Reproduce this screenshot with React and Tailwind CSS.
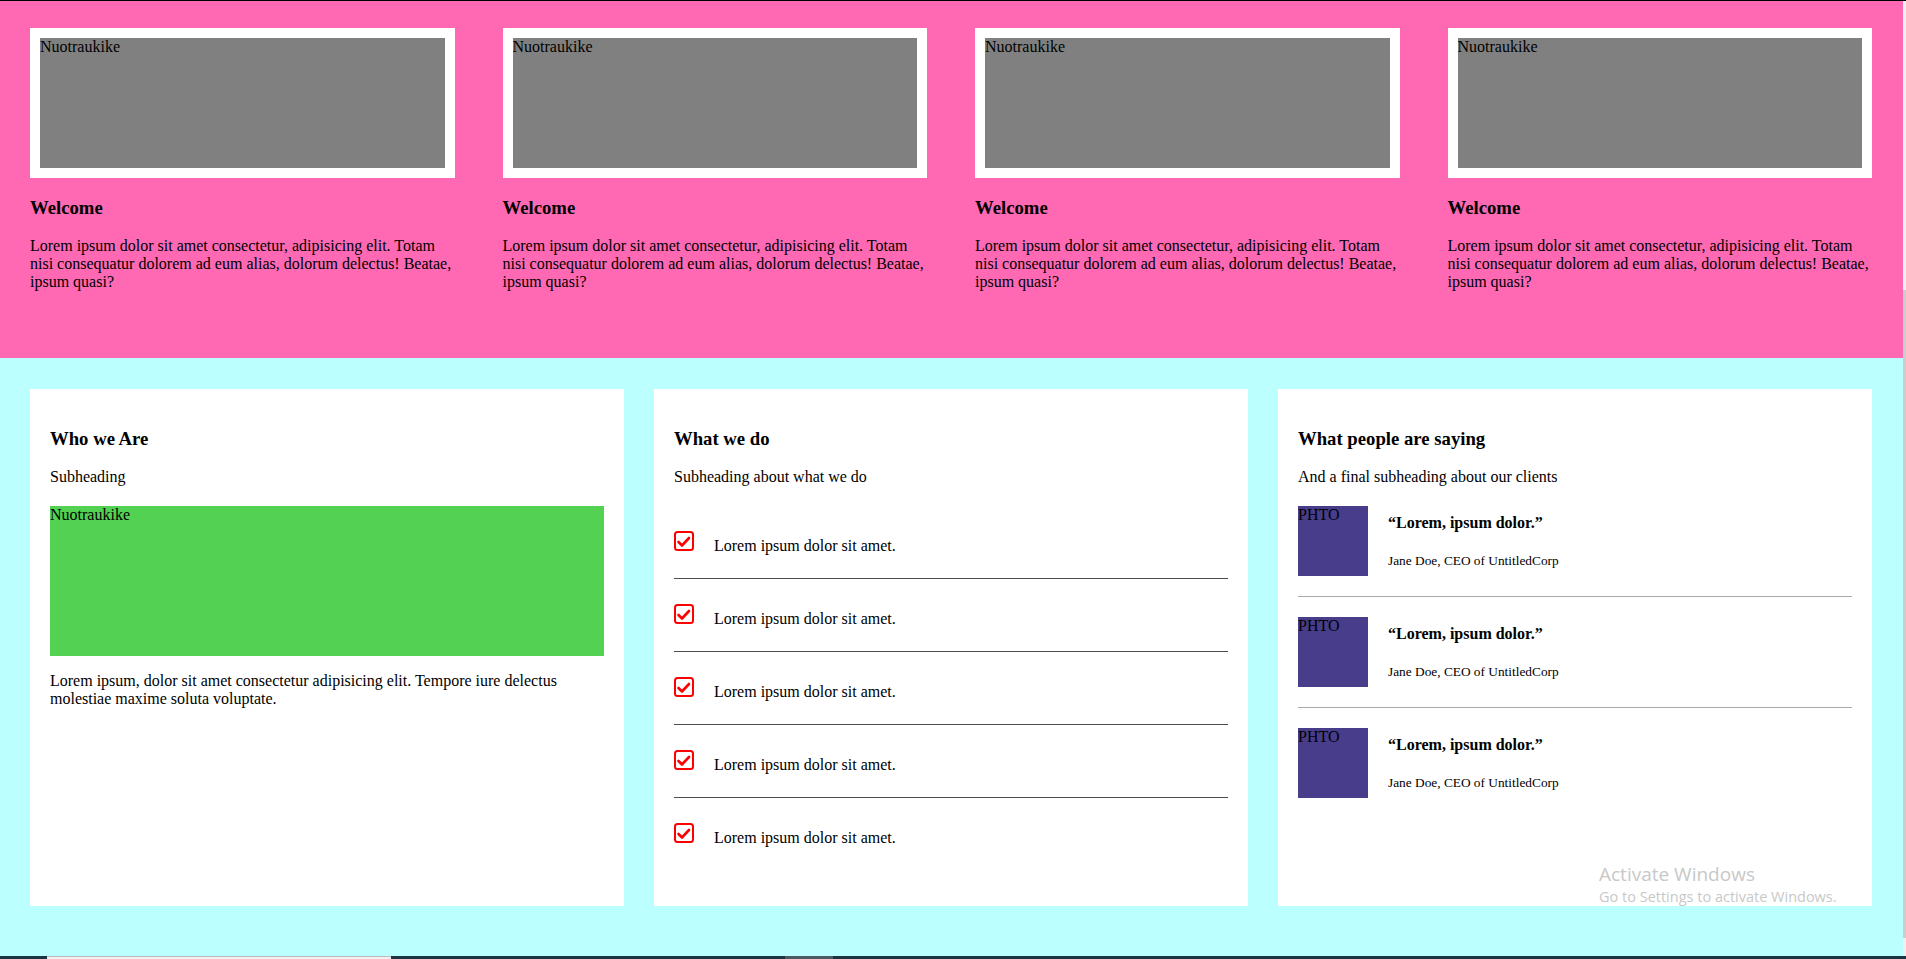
import React from "react";

const topCards = [0, 1, 2, 3];
const listItems = [0, 1, 2, 3, 4];
const testimonials = [0, 1, 2];

function CheckSquare() {
  return (
    <svg width="20" height="20" viewBox="0 0 20 20" className="shrink-0">
      <rect x="1" y="1" width="18" height="18" rx="2.5" fill="none" stroke="#ff0000" strokeWidth="2" />
      <polyline
        points="4.5,11 8,14.5 15,7"
        fill="none"
        stroke="#ff0000"
        strokeWidth="2.6"
        strokeLinecap="round"
        strokeLinejoin="round"
      />
    </svg>
  );
}

function CardHeader({ title, sub }) {
  return (
    <>
      <h3 className="mt-[18.72px] text-[18.72px] font-bold">{title}</h3>
      <p className="mt-[18.72px]">{sub}</p>
    </>
  );
}

export default function App() {
  return (
    <div className="relative flex h-[959px] w-[1906px] flex-col overflow-hidden font-['Liberation_Serif',serif] text-[16px] leading-[normal] text-black">
      <div className="h-px shrink-0 bg-black" />

      <div className="flex min-h-0 flex-1">
        <main className="flex flex-1 flex-col">
          {/* welcome row */}
          <section className="grid h-[357px] shrink-0 grid-cols-4 items-start gap-x-[48px] bg-[#ff69b4] pl-[30px] pr-[31px] pt-[27px]">
            {topCards.map((i) => (
              <div key={i}>
                <div className="border-[10px] border-white">
                  <div className="h-[130px] bg-[#808080]">Nuotraukike</div>
                </div>
                <h3 className="mt-[18.72px] text-[18.72px] font-bold">Welcome</h3>
                <p className="mt-[18.72px]">
                  Lorem ipsum dolor sit amet consectetur, adipisicing elit. Totam nisi consequatur dolorem ad eum
                  alias, dolorum delectus! Beatae, ipsum quasi?
                </p>
              </div>
            ))}
          </section>

          {/* info cards */}
          <section className="h-[598px] shrink-0 bg-[#bbffff] pl-[30px] pr-[31px] pt-[31px]">
            <div className="grid h-[517px] grid-cols-3 gap-x-[30px]">
              <div className="bg-white p-[20px]">
                <CardHeader title="Who we Are" sub="Subheading" />
                <div className="mt-[20px] h-[150px] bg-[#52d152]">Nuotraukike</div>
                <p className="mt-[16px]">
                  Lorem ipsum, dolor sit amet consectetur adipisicing elit. Tempore iure delectus molestiae maxime
                  soluta voluptate.
                </p>
              </div>

              <div className="bg-white p-[20px]">
                <CardHeader title="What we do" sub="Subheading about what we do" />
                <ul className="mt-[20px]">
                  {listItems.map((i) => (
                    <li
                      key={i}
                      className="flex items-baseline gap-[20px] border-b border-[#4d4d4d] pb-[23px] pt-[25px] last:border-b-0"
                    >
                      <CheckSquare />
                      <span>Lorem ipsum dolor sit amet.</span>
                    </li>
                  ))}
                </ul>
              </div>

              <div className="bg-white p-[20px]">
                <CardHeader title="What people are saying" sub="And a final subheading about our clients" />
                <div className="mt-[20px]">
                  {testimonials.map((i) => (
                    <div
                      key={i}
                      className="flex items-center gap-[20px] border-b border-[#aaaaaa] py-[20px] first:pt-0 last:border-b-0"
                    >
                      <div className="h-[70px] w-[70px] shrink-0 bg-[#483d8b]">PHTO</div>
                      <div>
                        <h4 className="font-bold">“Lorem, ipsum dolor.”</h4>
                        <p className="mt-[21.28px] text-[13.33px]">Jane Doe, CEO of UntitledCorp</p>
                      </div>
                    </div>
                  ))}
                </div>
              </div>
            </div>
          </section>
        </main>

        {/* scrollbar */}
        <div className="w-[3px] shrink-0 bg-[#f0f0f0]">
          <div className="mt-[289px] h-[648px] bg-[#cdcdcd]" />
        </div>
      </div>

      {/* taskbar edge */}
      <div className="flex h-[3px] shrink-0 bg-[#1c3440]">
        <div className="ml-[47px] w-[344px] border-t border-[#bdbdbd] bg-[#f0f0f0]" />
        <div className="ml-[394px] w-[48px] bg-[#4b5b61]" />
      </div>

      <div className="pointer-events-none absolute left-[1599px] top-[863px] font-['Open_Sans',sans-serif] text-[#c8c8c8]">
        <div className="text-[19px] leading-[23px]">Activate Windows</div>
        <div className="mt-[2px] text-[14.5px] leading-[17px]">Go to Settings to activate Windows.</div>
      </div>
    </div>
  );
}
